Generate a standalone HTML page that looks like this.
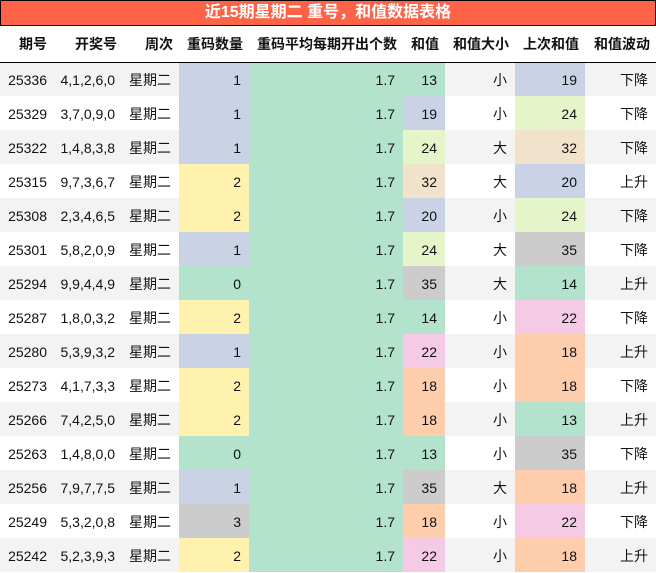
<!DOCTYPE html>
<html><head><meta charset="utf-8"><style>
*{margin:0;padding:0;box-sizing:border-box}
body{width:656px;height:573px;background:#fff;font-family:"Liberation Sans","Noto Sans CJK SC",sans-serif;overflow:hidden}
.title{height:26px;background:#FF6347;border:1px solid #000;color:#fff;font-weight:bold;font-size:16px;text-align:center;line-height:24px}
table{border-collapse:collapse;table-layout:fixed;width:656px}
th{height:36px;font-size:14px;font-weight:bold;text-align:right;padding-right:6px;border-bottom:1px solid #000;color:#111;white-space:nowrap}
td{height:34px;font-size:14px;text-align:right;padding-right:8px;padding-top:1px;color:#111;white-space:nowrap}
td:first-child{padding-right:5px}
th:first-child{padding-right:5px}
tr.s td{background:#F3F3F3}
tr td.b{background:#C9D3E5}tr td.g{background:#B3E2CD}tr td.y{background:#FFF2AE}tr td.p{background:#FDCDAC}
tr td.k{background:#F4CAE4}tr td.l{background:#E6F5C9}tr td.t{background:#F1E2CC}tr td.c{background:#CCCCCC}
</style></head><body>
<div class="title">近15期星期二 重号，和值数据表格</div>
<table>
<colgroup><col style="width:52px"><col style="width:71px"><col style="width:56px"><col style="width:70px"><col style="width:154px"><col style="width:42px"><col style="width:70px"><col style="width:70px"><col style="width:71px"></colgroup>
<tr><th>期号</th><th>开奖号</th><th>周次</th><th>重码数量</th><th>重码平均每期开出个数</th><th>和值</th><th>和值大小</th><th>上次和值</th><th>和值波动</th></tr>
<tr class="s"><td>25336</td><td>4,1,2,6,0</td><td>星期二</td><td class="b">1</td><td class="g">1.7</td><td class="g">13</td><td>小</td><td class="b">19</td><td>下降</td></tr>
<tr><td>25329</td><td>3,7,0,9,0</td><td>星期二</td><td class="b">1</td><td class="g">1.7</td><td class="b">19</td><td>小</td><td class="l">24</td><td>下降</td></tr>
<tr class="s"><td>25322</td><td>1,4,8,3,8</td><td>星期二</td><td class="b">1</td><td class="g">1.7</td><td class="l">24</td><td>大</td><td class="t">32</td><td>下降</td></tr>
<tr><td>25315</td><td>9,7,3,6,7</td><td>星期二</td><td class="y">2</td><td class="g">1.7</td><td class="t">32</td><td>大</td><td class="b">20</td><td>上升</td></tr>
<tr class="s"><td>25308</td><td>2,3,4,6,5</td><td>星期二</td><td class="y">2</td><td class="g">1.7</td><td class="b">20</td><td>小</td><td class="l">24</td><td>下降</td></tr>
<tr><td>25301</td><td>5,8,2,0,9</td><td>星期二</td><td class="b">1</td><td class="g">1.7</td><td class="l">24</td><td>大</td><td class="c">35</td><td>下降</td></tr>
<tr class="s"><td>25294</td><td>9,9,4,4,9</td><td>星期二</td><td class="g">0</td><td class="g">1.7</td><td class="c">35</td><td>大</td><td class="g">14</td><td>上升</td></tr>
<tr><td>25287</td><td>1,8,0,3,2</td><td>星期二</td><td class="y">2</td><td class="g">1.7</td><td class="g">14</td><td>小</td><td class="k">22</td><td>下降</td></tr>
<tr class="s"><td>25280</td><td>5,3,9,3,2</td><td>星期二</td><td class="b">1</td><td class="g">1.7</td><td class="k">22</td><td>小</td><td class="p">18</td><td>上升</td></tr>
<tr><td>25273</td><td>4,1,7,3,3</td><td>星期二</td><td class="y">2</td><td class="g">1.7</td><td class="p">18</td><td>小</td><td class="p">18</td><td>下降</td></tr>
<tr class="s"><td>25266</td><td>7,4,2,5,0</td><td>星期二</td><td class="y">2</td><td class="g">1.7</td><td class="p">18</td><td>小</td><td class="g">13</td><td>上升</td></tr>
<tr><td>25263</td><td>1,4,8,0,0</td><td>星期二</td><td class="g">0</td><td class="g">1.7</td><td class="g">13</td><td>小</td><td class="c">35</td><td>下降</td></tr>
<tr class="s"><td>25256</td><td>7,9,7,7,5</td><td>星期二</td><td class="b">1</td><td class="g">1.7</td><td class="c">35</td><td>大</td><td class="p">18</td><td>上升</td></tr>
<tr><td>25249</td><td>5,3,2,0,8</td><td>星期二</td><td class="c">3</td><td class="g">1.7</td><td class="p">18</td><td>小</td><td class="k">22</td><td>下降</td></tr>
<tr class="s"><td>25242</td><td>5,2,3,9,3</td><td>星期二</td><td class="y">2</td><td class="g">1.7</td><td class="k">22</td><td>小</td><td class="p">18</td><td>上升</td></tr>
</table>
</body></html>
